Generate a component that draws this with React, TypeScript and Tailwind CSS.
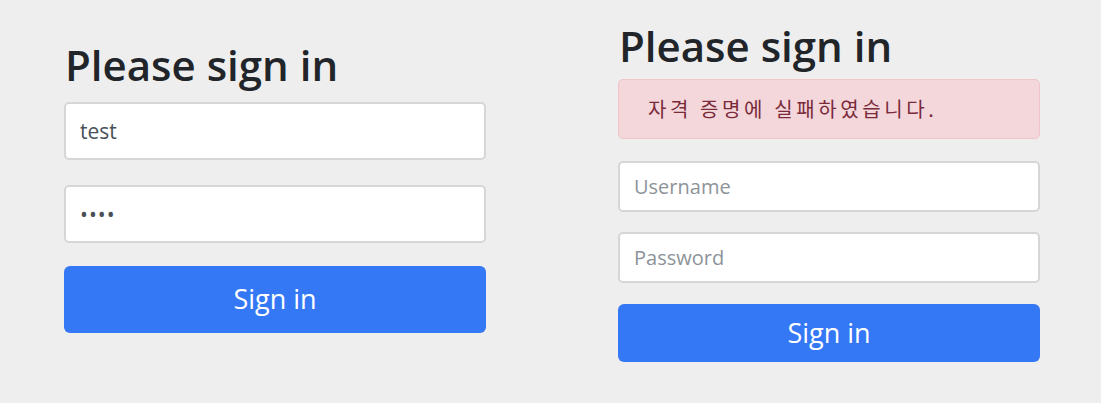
import React from "react";

const sans = "font-['Open_Sans','Noto_Sans','Noto_Sans_CJK_KR',sans-serif]";

function Field({
  value,
  placeholder,
  type = "text",
  className,
}: {
  value?: string;
  placeholder?: string;
  type?: string;
  className: string;
}) {
  return (
    <input
      type={type}
      defaultValue={value}
      placeholder={placeholder}
      readOnly
      className={
        "block w-full rounded-[5px] border-2 border-[#d6d6d6] bg-white px-[14px] text-[#495057] outline-none placeholder:text-[#8d9399] " +
        className
      }
    />
  );
}

export default function App() {
  return (
    <div className={`min-h-[403px] w-full bg-[#eeeeee] ${sans}`}>
      <div className="flex gap-[132px] pl-[64px]">
        {/* left: filled form */}
        <div className="w-[422px]">
          <h2 className="mt-[38px] pl-[1px] text-[42px] font-semibold leading-[54px] text-[#212529]">
            Please sign in
          </h2>
          <div className="mt-[10px] flex flex-col gap-[25px]">
            <Field value="test" className="h-[58px] text-[21px]" />
            <Field value="test" type="password" className="h-[58px] text-[21px] tracking-[1px]" />
          </div>
          <button className="mt-[23px] h-[67px] w-full rounded-[6px] bg-[#3578f6] text-[27px] text-white">
            Sign in
          </button>
        </div>

        {/* right: failed login */}
        <div className="w-[422px]">
          <h2 className="mt-[22px] pl-[1px] text-[42px] font-semibold leading-[48px] text-[#212529]">
            Please sign in
          </h2>
          <div className="mt-[9px] flex h-[60px] items-center rounded-[5px] border border-[#f1c4c8] bg-[#f3d7da] pl-[29px] font-['Noto_Sans_CJK_KR',sans-serif] text-[20px] tracking-[3.6px] text-[#7a2a3a]">
            자격 증명에 실패하였습니다.
          </div>
          <div className="mt-[22px] flex flex-col gap-[20px]">
            <Field placeholder="Username" className="h-[51px] text-[20px]" />
            <Field placeholder="Password" type="password" className="h-[51px] text-[20px]" />
          </div>
          <button className="mt-[21px] h-[58px] w-full rounded-[6px] bg-[#3578f6] text-[27px] text-white">
            Sign in
          </button>
        </div>
      </div>
    </div>
  );
}
